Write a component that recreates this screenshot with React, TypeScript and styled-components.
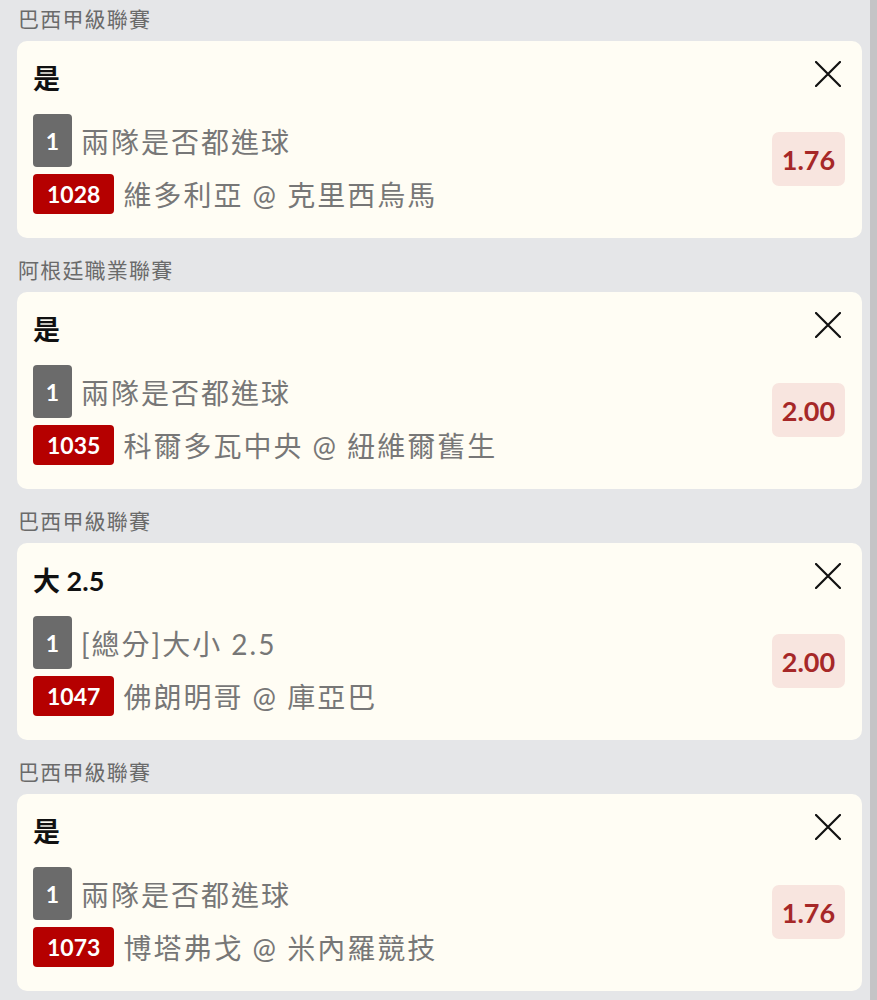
import styled, { createGlobalStyle } from "styled-components";

const GlobalStyle = createGlobalStyle`
  html, body {
    margin: 0;
    padding: 0;
    background: #e5e6e8;
    overflow: hidden;
  }
  body {
    font-family: "Lato", "Noto Sans CJK TC", sans-serif;
  }
`;

type Bet = {
  league: string;
  pick: string;
  market: string;
  code: string;
  match: string;
  odds: string;
};

const bets: Bet[] = [
  { league: "巴西甲級聯賽", pick: "是", market: "兩隊是否都進球", code: "1028", match: "維多利亞 @ 克里西烏馬", odds: "1.76" },
  { league: "阿根廷職業聯賽", pick: "是", market: "兩隊是否都進球", code: "1035", match: "科爾多瓦中央 @ 紐維爾舊生", odds: "2.00" },
  { league: "巴西甲級聯賽", pick: "大 2.5", market: "[總分]大小 2.5", code: "1047", match: "佛朗明哥 @ 庫亞巴", odds: "2.00" },
  { league: "巴西甲級聯賽", pick: "是", market: "兩隊是否都進球", code: "1073", match: "博塔弗戈 @ 米內羅競技", odds: "1.76" },
];

const Screen = styled.div`
  display: flex;
  height: 1000px;
  overflow: hidden;
`;

const List = styled.div`
  flex: 1;
  margin-top: -13px;
  padding: 0 8px 0 17px;
`;

const ScrollTrack = styled.div`
  width: 7px;
  background: #c4c4c6;
`;

const League = styled.div`
  margin: 17px 0 7px 1px;
  line-height: 30px;
  font-size: 21px;
  letter-spacing: 1.2px;
  color: #6a6a6a;
`;

const Card = styled.div`
  background: #fffdf4;
  border-radius: 10px;
  padding: 20px 17px 24px 16px;
`;

const Header = styled.div`
  display: flex;
  align-items: flex-start;
  justify-content: space-between;
`;

const Pick = styled.div`
  font-size: 27px;
  font-weight: 700;
  line-height: 36px;
  color: #111;
`;

const Close = styled.button`
  width: 26px;
  height: 26px;
  margin-right: 4px;
  padding: 0;
  border: none;
  background: none;
  display: flex;
`;

const Body = styled.div`
  display: flex;
  align-items: center;
  margin-top: 17px;
`;

const Lines = styled.div`
  flex: 1;
  display: flex;
  flex-direction: column;
  gap: 7px;
`;

const Line = styled.div`
  display: flex;
  align-items: center;
  gap: 9px;
`;

const Badge = styled.span<{ $tone: "grey" | "red" }>`
  display: inline-flex;
  align-items: center;
  justify-content: center;
  box-sizing: border-box;
  height: ${(p) => (p.$tone === "grey" ? "53px" : "40px")};
  min-width: 39px;
  padding: 0 ${(p) => (p.$tone === "grey" ? "0" : "14px")};
  border-radius: 4px;
  background: ${(p) => (p.$tone === "grey" ? "#6b6b6b" : "#b50000")};
  color: #fff;
  font-size: 23px;
  font-weight: 700;
`;

const LineText = styled.span`
  font-size: 28px;
  letter-spacing: 2px;
  color: #777;
  white-space: nowrap;
`;

const Odds = styled.div`
  width: 73px;
  height: 54px;
  margin-bottom: 10px;
  display: flex;
  align-items: center;
  justify-content: center;
  border-radius: 7px;
  background: #f8e5df;
  color: #a62828;
  font-size: 27px;
  font-weight: 700;
`;

const CloseIcon = () => (
  <svg width="26" height="26" viewBox="0 0 26 26">
    <path d="M1 1 L25 25 M25 1 L1 25" stroke="#111" strokeWidth="2.2" strokeLinecap="round" />
  </svg>
);

export default function App() {
  return (
    <Screen>
      <GlobalStyle />
      <List>
        {bets.map((b) => (
          <div key={b.code}>
            <League>{b.league}</League>
            <Card>
              <Header>
                <Pick>{b.pick}</Pick>
                <Close aria-label="remove">
                  <CloseIcon />
                </Close>
              </Header>
              <Body>
                <Lines>
                  <Line>
                    <Badge $tone="grey">1</Badge>
                    <LineText>{b.market}</LineText>
                  </Line>
                  <Line>
                    <Badge $tone="red">{b.code}</Badge>
                    <LineText>{b.match}</LineText>
                  </Line>
                </Lines>
                <Odds>{b.odds}</Odds>
              </Body>
            </Card>
          </div>
        ))}
      </List>
      <ScrollTrack />
    </Screen>
  );
}
